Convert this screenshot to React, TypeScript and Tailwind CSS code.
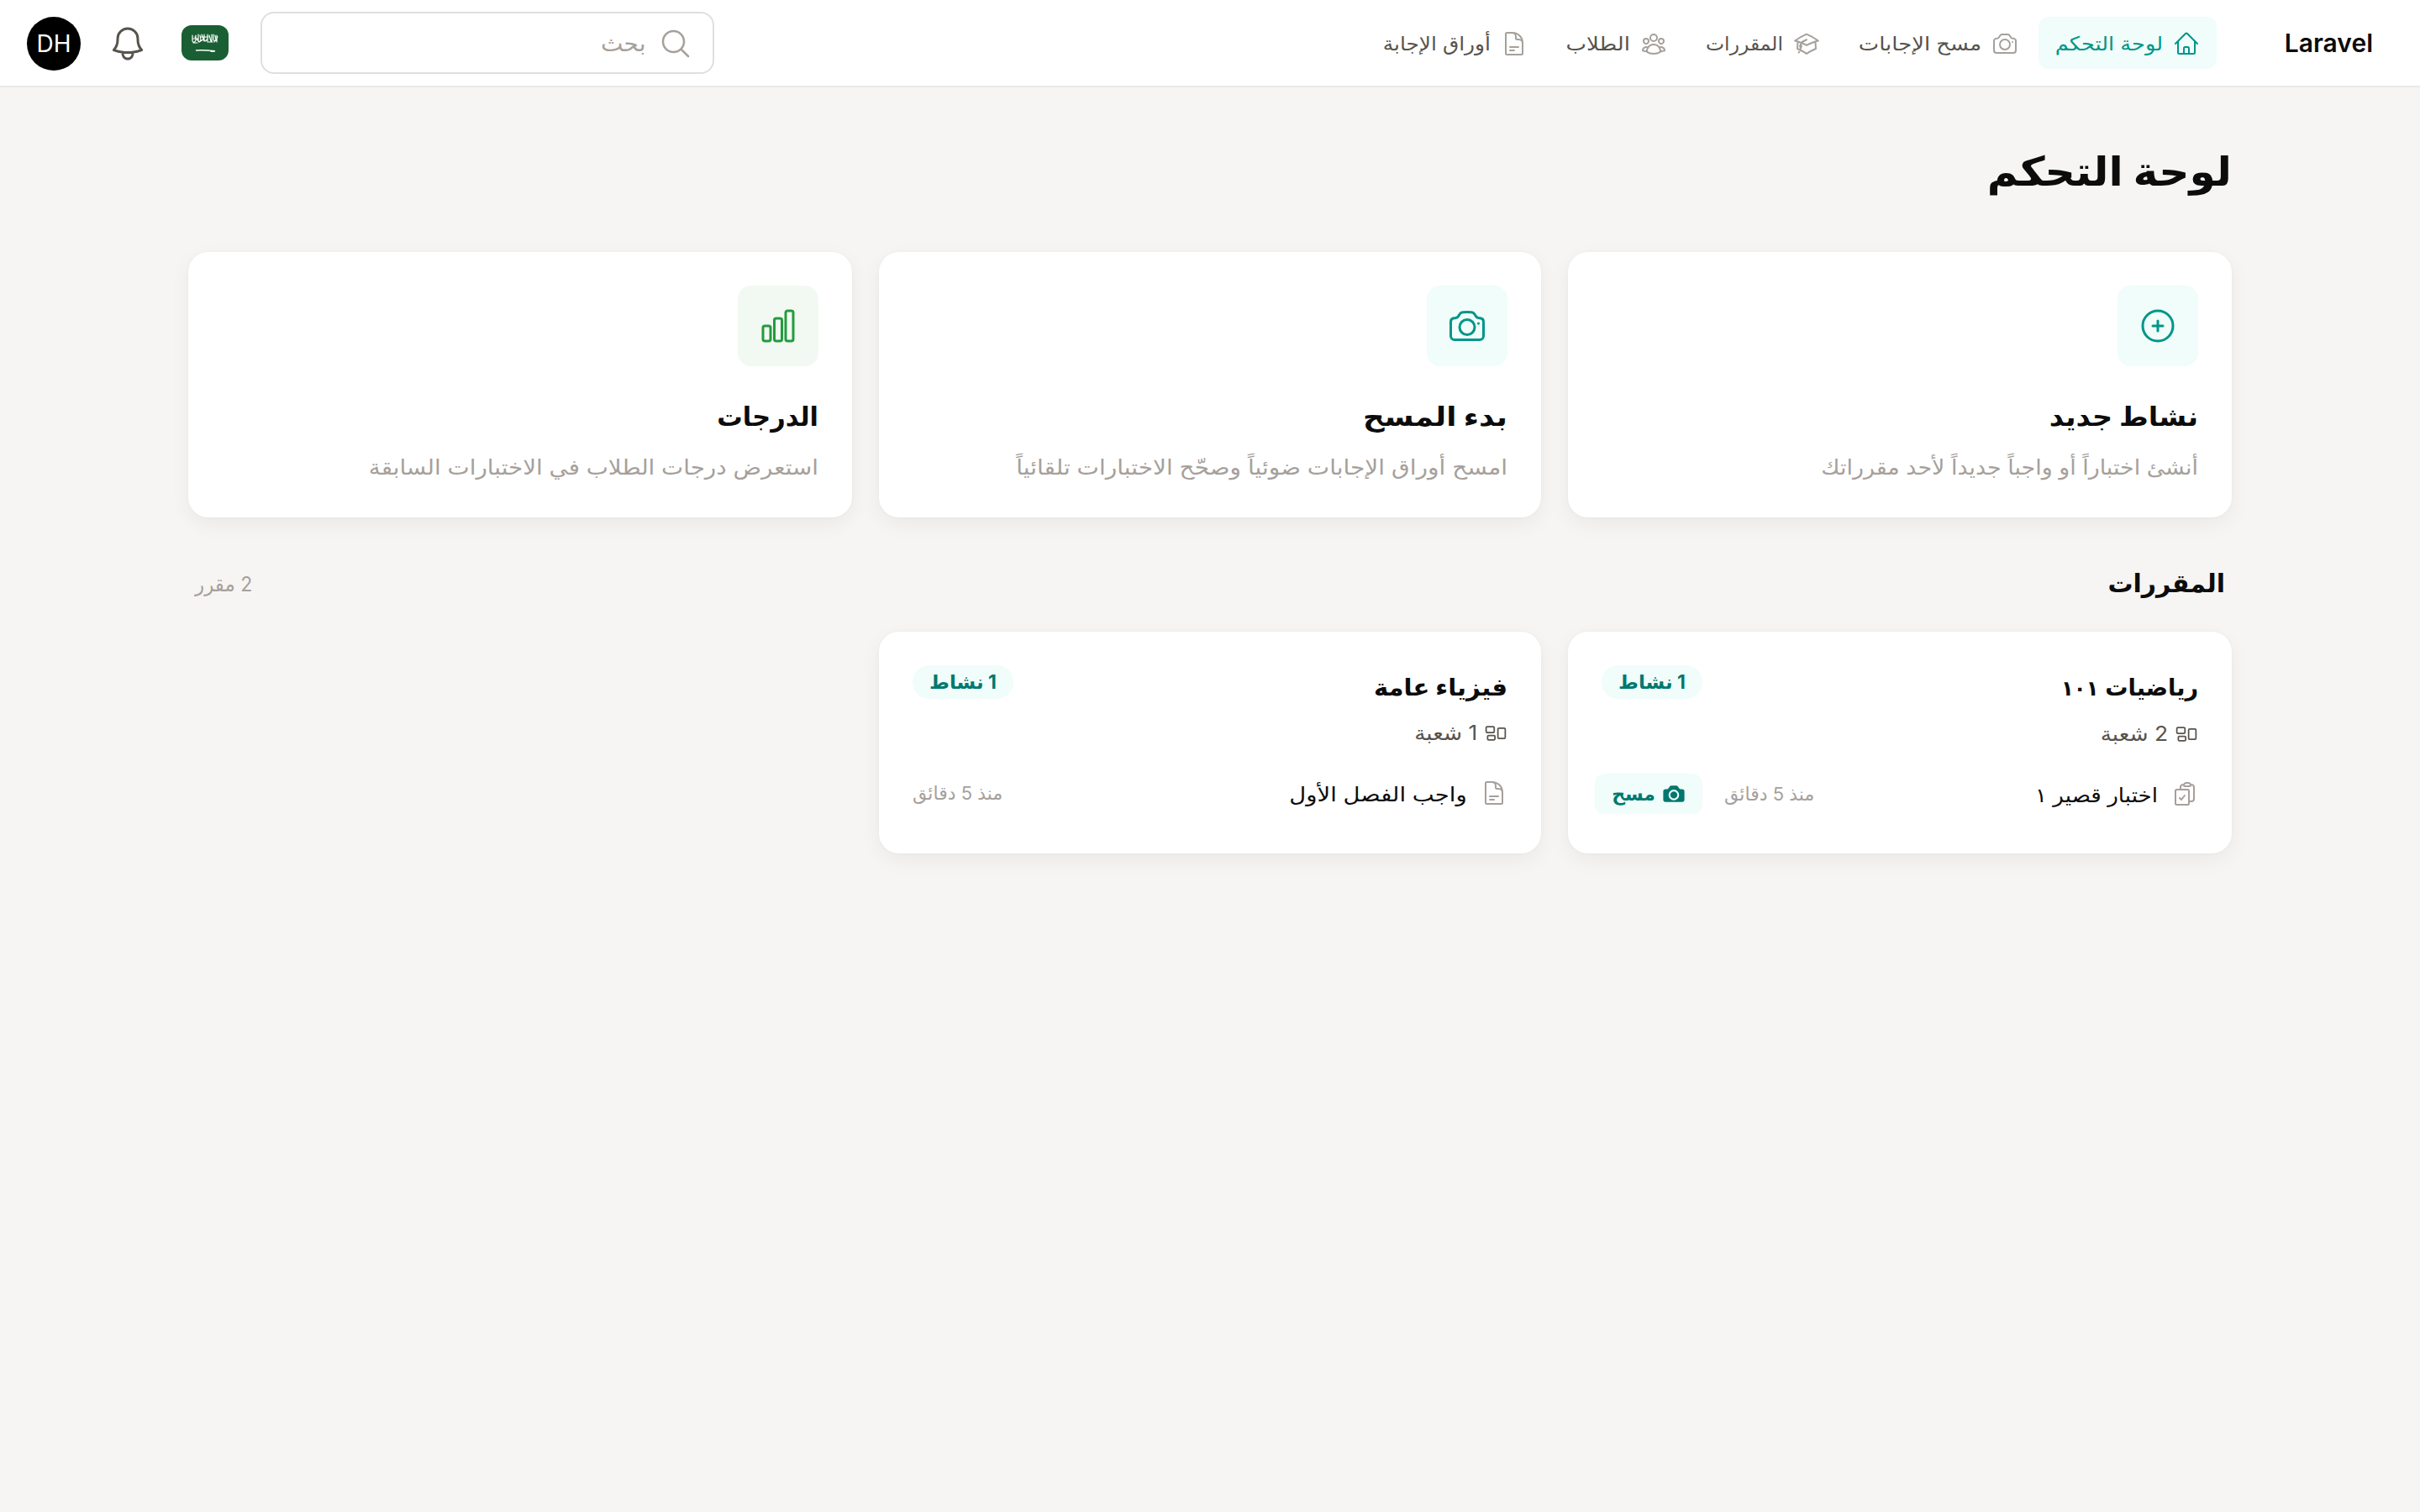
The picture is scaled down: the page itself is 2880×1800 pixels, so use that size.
import type { ReactNode } from 'react';
import type { IconType } from 'react-icons';
import {
  HiMiniCamera,
  HiOutlineAcademicCap,
  HiOutlineBell,
  HiOutlineCamera,
  HiOutlineChartBar,
  HiOutlineClipboardDocumentCheck,
  HiOutlineDocumentText,
  HiOutlineHome,
  HiOutlineMagnifyingGlass,
  HiOutlinePlusCircle,
  HiOutlineRectangleGroup,
  HiOutlineUserGroup,
} from 'react-icons/hi2';

type NavItem = { label: string; icon: IconType; width: string; stretch: string; active?: boolean };

const navItems: NavItem[] = [
  { label: 'لوحة التحكم', icon: HiOutlineHome, width: 'w-[128px]', stretch: 'scale-x-[1.115]', active: true },
  { label: 'مسح الإجابات', icon: HiOutlineCamera, width: 'w-[148px]', stretch: 'scale-x-[1.125]' },
  { label: 'المقررات', icon: HiOutlineAcademicCap, width: 'w-[94px]', stretch: 'scale-x-[1.02]' },
  { label: 'الطلاب', icon: HiOutlineUserGroup, width: 'w-[78px]', stretch: 'scale-x-[1.13]' },
  { label: 'أوراق الإجابة', icon: HiOutlineDocumentText, width: 'w-[128px]', stretch: 'scale-x-[1.08]' },
];

const actions = [
  {
    title: 'نشاط جديد',
    titleStretch: 'scale-x-[1.08]',
    text: 'أنشئ اختباراً أو واجباً جديداً لأحد مقرراتك',
    textStretch: 'scale-x-[1.075]',
    icon: HiOutlinePlusCircle,
    tone: 'bg-[#f0fdfa] text-[#009689]',
  },
  {
    title: 'بدء المسح',
    titleStretch: 'scale-x-[1.15]',
    text: 'امسح أوراق الإجابات ضوئياً وصحّح الاختبارات تلقائياً',
    textStretch: 'scale-x-[1.12]',
    icon: HiOutlineCamera,
    tone: 'bg-[#f0fdfa] text-[#009689]',
  },
  {
    title: 'الدرجات',
    titleStretch: 'scale-x-[0.98]',
    text: 'استعرض درجات الطلاب في الاختبارات السابقة',
    textStretch: 'scale-x-[1.11]',
    icon: HiOutlineChartBar,
    tone: 'bg-[#f2f9f2] text-[#249b3e]',
  },
];

const courses = [
  {
    title: 'رياضيات',
    number: '١٠١',
    titleStretch: 'scale-x-[0.97]',
    sections: '2 شعبة',
    activity: 'اختبار قصير ١',
    activityStretch: 'scale-x-[1.09]',
    icon: HiOutlineClipboardDocumentCheck,
    scan: true,
  },
  {
    title: 'فيزياء عامة',
    number: '',
    titleStretch: 'scale-x-[1.04]',
    sections: '1 شعبة',
    activity: 'واجب الفصل الأول',
    activityStretch: 'scale-x-[1.145]',
    icon: HiOutlineDocumentText,
    scan: false,
  },
];

function Card({ className, children }: { className: string; children: ReactNode }) {
  return (
    <div className={`rounded-3xl bg-white p-10 shadow-[0_8px_24px_rgba(0,0,0,0.05),0_0_4px_rgba(0,0,0,0.03)] ${className}`}>
      {children}
    </div>
  );
}

function Flag() {
  return (
    <svg className="ms-[38px] h-[42px] w-14 rounded-xl bg-[#195f33]" fill="none" stroke="#fff" strokeLinecap="round" viewBox="0 0 56 42">
      <path
        d="M13 12v7q2 3 4-1v-6M14 21h5M16 14l4 5M20 11v8q2 2 3-2l-1-5M21 20l5-3M24 11l3 8M27 11v7q2 2 3-1M28 14h4M31 11v9M33 12l2 7M32 20h5M36 11v8M38 11v6q1 3 3 1l-1-6M42 12v8M39 20l4-6M14 16h6M23 14h5"
        strokeWidth="1.2"
      />
      <path d="M17.5 30q8-.6 22 .6" strokeWidth="1.4" />
      <path d="M35 31.3h4" strokeWidth="1.2" />
    </svg>
  );
}

function Header() {
  return (
    <header className="flex h-[104px] items-center border-b-2 border-[#e9e9ea] bg-white pr-14 pl-8">
      <div className="w-[186px] text-[30px] font-semibold text-[#0c0c0c]">Laravel</div>
      <nav className="flex gap-1">
        {navItems.map((item) => (
          <a
            className={`flex h-[62px] items-center gap-3 rounded-xl px-5 pt-0.5 text-[23px] ${item.active ? 'bg-[#f0fdfa] text-[#009689]' : 'text-[#57534d]'}`}
            href="#"
            key={item.label}
          >
            <item.icon className={`size-8 shrink-0 ${item.active ? '' : 'text-[#a6a09b]'}`} />
            <span className={`origin-right whitespace-nowrap ${item.width} ${item.stretch}`}>{item.label}</span>
          </a>
        ))}
      </nav>

      <div className="ms-auto flex h-[74px] w-[540px] items-center gap-4 rounded-2xl border-2 border-[#dfdfdf] px-6 pt-0.5 text-[27px] text-[#a6a09b]">
        <HiOutlineMagnifyingGlass className="size-10" />
        <span className="origin-right scale-x-[1.04]">بحث</span>
      </div>
      <Flag />
      <HiOutlineBell className="ms-10 mt-0.5 size-12 text-[#57534d]" />
      <div className="ms-8 mt-0.5 grid size-16 place-items-center rounded-full bg-black text-[28px] text-white">DH</div>
    </header>
  );
}

function App() {
  return (
    <div className="min-h-screen bg-[#f6f5f3] font-['Inter','DejaVu_Sans',sans-serif] text-[#0c0c0c]" dir="rtl">
      <Header />
      <main className="mx-auto w-[2432px]">
        <h1 className="origin-right scale-x-[1.05] pt-[68px] text-[48px] leading-16 font-bold">لوحة التحكم</h1>

        <div className="mt-16 grid grid-cols-[790px_788px_790px] gap-8">
          {actions.map((action) => (
            <Card className="h-[316px]" key={action.title}>
              <div className={`grid size-24 place-items-center rounded-2xl ${action.tone}`}>
                <action.icon className="size-12" />
              </div>
              <h2 className={`mt-9 origin-right text-[31px] leading-12 font-bold ${action.titleStretch}`}>{action.title}</h2>
              <p className={`mt-4 origin-right text-[25px] leading-10 whitespace-nowrap text-[#a6a09b] ${action.textStretch}`}>{action.text}</p>
            </Card>
          ))}
        </div>

        <div className="mt-[54px] flex h-12 items-center justify-between px-2">
          <h2 className="text-[30px] font-bold">المقررات</h2>
          <span className="origin-left scale-x-[0.96] pt-1 text-[24px] text-[#a6a09b]">2 مقرر</span>
        </div>

        <div className="mt-[34px] grid grid-cols-[790px_788px_790px] gap-8">
          {courses.map((course) => (
            <Card className="h-[264px]" key={course.title}>
              <div className="flex justify-between">
                <h3 className={`origin-right text-[28px] leading-[52px] font-bold ${course.titleStretch}`}>
                  {course.title}
                  {course.number && <span className="ms-2 text-[25px] tracking-[-8px]">{course.number}</span>}
                </h3>
                <span className="grid h-10 w-[120px] place-items-center rounded-full bg-[#f0fdfa] text-[23px] font-bold whitespace-nowrap text-[#00786f]">1 نشاط</span>
              </div>
              <div className="mt-3 flex h-8 items-center gap-2 text-[24px] text-[#57534d]">
                <HiOutlineRectangleGroup className="size-7" />
                <span className="origin-right scale-x-[1.1] pt-0.5">{course.sections}</span>
              </div>
              <div className="mt-8 flex h-12 items-center">
                <course.icon className="size-8 text-[#a6a09b]" />
                <span className={`ms-4 origin-right pt-1 text-[24px] ${course.activityStretch}`}>{course.activity}</span>
                <span className="ms-auto text-[22px] text-[#a6a09b]">منذ 5 دقائق</span>
                {course.scan && (
                  <button className="ms-[26px] -me-2 flex h-12 w-32 items-center gap-2 rounded-xl bg-[#f0fdfa] px-5 text-[22px] font-bold text-[#00786f]" type="button">
                    <HiMiniCamera className="size-7 shrink-0" />
                    مسح
                  </button>
                )}
              </div>
            </Card>
          ))}
        </div>
      </main>
    </div>
  );
}

export default App;
